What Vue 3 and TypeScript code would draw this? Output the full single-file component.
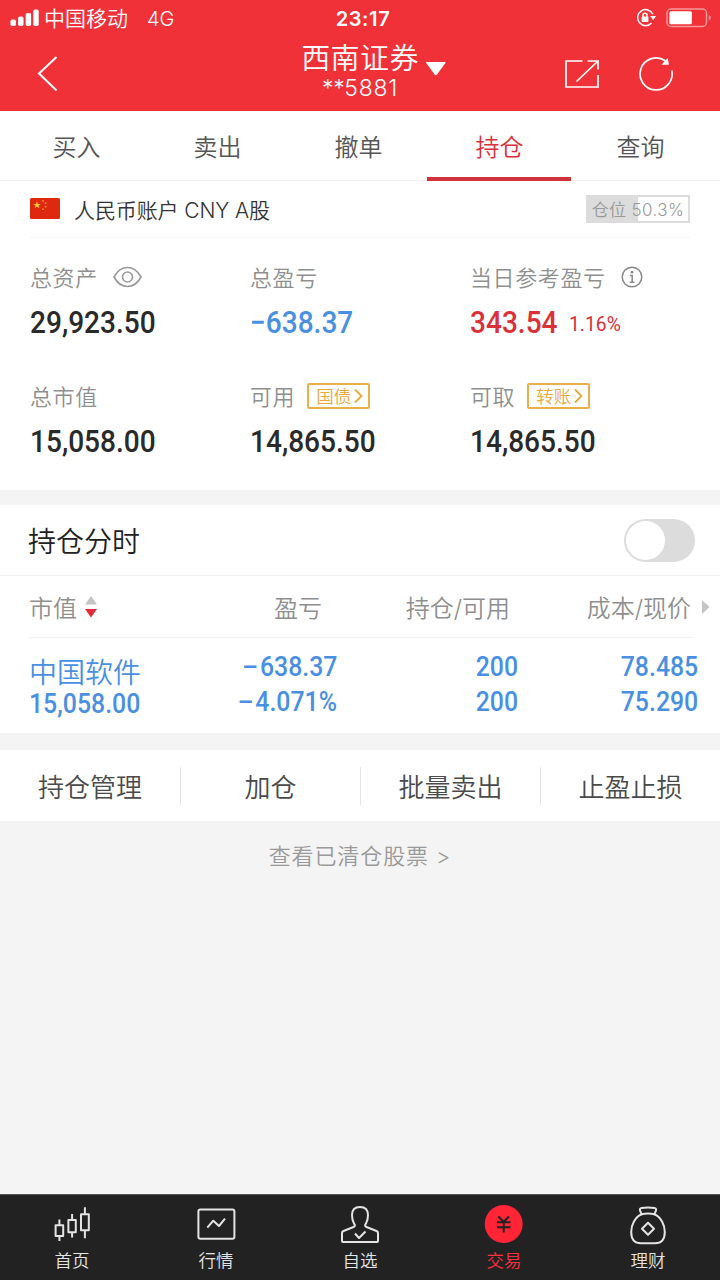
<script setup lang="ts">
import { ref } from 'vue'

interface Asset {
  label: string
  value: string
  tone?: 'fall' | 'rise'
  icon?: 'eye' | 'info'
  tag?: string
  extra?: string
}

const tabs: string[] = ['买入', '卖出', '撤单', '持仓', '查询']
const activeTab = ref(3)

const assets: Asset[] = [
  { label: '总资产', value: '29,923.50', icon: 'eye' },
  { label: '总盈亏', value: '−638.37', tone: 'fall' },
  { label: '当日参考盈亏', value: '343.54', tone: 'rise', icon: 'info', extra: '1.16%' },
  { label: '总市值', value: '15,058.00' },
  { label: '可用', value: '14,865.50', tag: '国债' },
  { label: '可取', value: '14,865.50', tag: '转账' },
]

const position = 50.3
const showChart = ref(false)
const actions: string[] = ['持仓管理', '加仓', '批量卖出', '止盈止损']
const navItems: string[] = ['首页', '行情', '自选', '交易', '理财']
const activeNav = ref(3)
</script>

<template>
  <div class="app">
    <header class="header">
      <div class="status">
        <div class="carrier">
          <svg width="29" height="18" viewBox="0 0 29 18" fill="#fff">
            <rect x="0.5" y="10.5" width="5.4" height="6.5" rx="1.8" />
            <rect x="8.1" y="7.5" width="5.4" height="9.5" rx="1.8" />
            <rect x="15.7" y="4" width="5.4" height="13" rx="1.8" />
            <rect x="23.3" y="0.5" width="5.4" height="16.5" rx="1.8" />
          </svg>
          <span class="carrier-name">中国移动</span>
          <span class="network">4G</span>
        </div>
        <span class="clock">23:17</span>
        <div class="indicators">
          <svg width="20" height="20" viewBox="0 0 20 20" fill="none" stroke="#fff" stroke-width="1.5">
            <path d="M16.9 6.2A8 8 0 1 0 15.6 15" />
            <path d="M14.2 8h5.8L17.2 12.2Z" fill="#fff" stroke="none" />
            <rect x="5.6" y="8.5" width="6.8" height="5.5" rx="0.8" fill="#fff" stroke="none" />
            <path d="M7 9V7.2a2 2 0 0 1 4 0V9" />
          </svg>
          <svg width="46" height="20" viewBox="0 0 46 20" fill="none">
            <rect x="1" y="1" width="39.5" height="17.5" rx="4" stroke="#fff" stroke-opacity="0.5" stroke-width="1.4" />
            <rect x="3.4" y="3.2" width="22.5" height="13" rx="1.5" fill="#fff" />
            <path d="M42.8 6.8q2 1 2 3t-2 3z" fill="#fff" fill-opacity="0.5" />
          </svg>
        </div>
      </div>
      <div class="titlebar">
        <svg class="back" width="22" height="38" viewBox="0 0 22 38" fill="none" stroke="#fff" stroke-width="2">
          <path d="M19.5 2 2 18.5 19.5 35.5" />
        </svg>
        <div class="account">
          <span class="broker">西南证券</span>
          <span class="number"><span class="mask">**</span>5881</span>
        </div>
        <svg class="caret" width="22" height="16" viewBox="0 0 22 16"><path d="M1.5 1h18.6q.8.2.3 1L12 13.6q-1.2 1.3-2.4 0L1.2 2q-.5-.8.3-1z" fill="#fff" /></svg>
        <div class="tools">
          <svg width="36" height="30" viewBox="0 0 36 30" fill="none" stroke="#fff" stroke-width="1.7">
            <path d="M18.5 2H2V28H34V16M23.5 2H34V10.5M33.5 2.5 12.5 22.5" />
          </svg>
          <svg width="36" height="36" viewBox="0 0 36 36" fill="none" stroke="#fff" stroke-width="1.7">
            <path d="M33.7 14.5A16 16 0 1 1 27.5 5" />
            <path d="M23.5 8.800H31L29.6 2z" fill="#fff" stroke="none" />
          </svg>
        </div>
      </div>
    </header>

    <nav class="tabs">
      <button v-for="(tab, i) in tabs" :key="tab" :class="{ active: i === activeTab }" @click="activeTab = i">{{ tab }}</button>
    </nav>

    <section class="summary">
      <div class="account-row">
        <svg width="30" height="21" viewBox="0 0 30 21">
          <rect width="30" height="21" rx="1.5" fill="#de2910" />
          <path d="M7 3.2l.9 2.7h2.9L8.500 7.600l.9 2.700L7 8.600l-2.400 1.700.9-2.700-2.300-1.700h2.900z" fill="#ffce1f" />
          <g fill="#f5a623"><circle cx="13" cy="2.8" r=".9" /><circle cx="15.6" cy="5.2" r=".9" /><circle cx="15.6" cy="8.6" r=".9" /><circle cx="13" cy="11.2" r=".9" /></g>
        </svg>
        <span class="account-name">人民币账户 CNY A股</span>
        <div class="ratio">
          <div class="ratio-fill" :style="{ width: position + '%' }"></div>
          <span>仓位 {{ position }}%</span>
        </div>
      </div>
      <div class="assets">
        <div v-for="a in assets" :key="a.label" class="asset">
          <div class="asset-label">
            <span class="asset-title">{{ a.label }}</span>
            <svg v-if="a.icon === 'eye'" class="eye" width="29" height="22" viewBox="0 0 29 22" fill="none" stroke="#999" stroke-width="1.6">
              <path d="M1 11C4.5 4.500 9 1.500 14.500 1.500S24.500 4.500 28 11C24.500 17.500 20 20.500 14.500 20.500S4.500 17.500 1 11z" />
              <circle cx="14.5" cy="11" r="5" />
            </svg>
            <svg v-if="a.icon === 'info'" class="info" width="22" height="22" viewBox="0 0 22 22" fill="none" stroke="#888" stroke-width="1.5">
              <circle cx="11" cy="11" r="9.8" />
              <circle cx="11" cy="6.2" r="1.4" fill="#888" stroke="none" />
              <path d="M9 9.500h2.200v6.500M8.800 16.200h4.600" />
            </svg>
            <span v-if="a.tag" class="tag"><span>{{ a.tag }}</span><svg width="9" height="16" viewBox="0 0 9 16" fill="none" stroke="#e9a93c" stroke-width="1.8"><path d="M1 1.500 7.500 8 1 14.500" /></svg></span>
          </div>
          <div class="asset-value" :class="a.tone">
            <span class="num">{{ a.value }}</span><span v-if="a.extra" class="extra">{{ a.extra }}</span>
          </div>
        </div>
      </div>
    </section>

    <section class="holdings">
      <div class="chart-row">
        <span>持仓分时</span>
        <button class="switch" :class="{ on: showChart }" @click="showChart = !showChart"><i></i></button>
      </div>
      <div class="table-head">
        <span class="sort">市值
          <svg width="12" height="22" viewBox="0 0 12 22"><path d="M6 0 12 8.500H0z" fill="#c4c4c4" /><path d="M0 13h12L6 21.500z" fill="#e02b3a" /></svg>
        </span>
        <span>盈亏</span><span>持仓/可用</span><span>成本/现价</span>
        <svg class="more" width="8" height="14" viewBox="0 0 8 14"><path d="M0 0 7.500 7 0 14z" fill="#c4c4c4" /></svg>
      </div>
      <div class="stock">
        <div class="stock-name"><span>中国软件</span><b class="num">15,058.00</b></div>
        <div class="cell"><b class="num"><span class="sign">−</span>638.37</b><b class="num"><span class="sign">−</span>4.071%</b></div>
        <div class="cell"><b class="num">200</b><b class="num">200</b></div>
        <div class="cell"><b class="num">78.485</b><b class="num">75.290</b></div>
      </div>
    </section>

    <section class="actions">
      <button v-for="item in actions" :key="item">{{ item }}</button>
    </section>

    <a class="cleared">查看已清仓股票 <span>&gt;</span></a>

    <footer class="nav">
      <button v-for="(item, i) in navItems" :key="item" :class="{ active: i === activeNav }" @click="activeNav = i">
        <svg width="48" height="44" viewBox="0 0 48 44" fill="none" stroke="#e4e4e4" stroke-width="2" stroke-linejoin="round">
          <g v-if="i === 0">
            <rect x="7.6" y="23.2" width="7.6" height="10.8" /><path d="M11.4 17.500v6M11.400 34v5" />
            <rect x="20.4" y="18" width="7.4" height="12.3" /><path d="M24.100 12v6M24.100 30.300v5.200" />
            <rect x="33" y="12.2" width="7.8" height="16" /><path d="M36.900 5.300v7M36.900 28.200v8" />
          </g>
          <g v-else-if="i === 1">
            <rect x="6.4" y="7.4" width="36" height="29.4" rx="2" />
            <path d="M15.300 25.700 21.300 18.700 27 24 33 16.700" />
          </g>
          <g v-else-if="i === 2">
            <path d="M6 39V31q0-1.500 1.500-2L17.500 25q2.500-1.200.5-3.500C16.500 19 16 17 16 13C16 8 19 5 24 5s8 3 8 8c0 4-.5 6-2 8.500q-2 2.300.5 3.500L40.500 29q1.500.5 1.500 2V39q0 1-1 1H7q-1 0-1-1z" />
            <path d="M19 31.500 23 36 29.500 29.500" />
          </g>
          <g v-else-if="i === 3">
            <circle cx="23.7" cy="22" r="19" fill="#ff2436" stroke="none" />
            <path d="M18.300 14.500 23.700 19.800 29 14.500M17 20.200H30.500M17 25.200H30.500M23.700 19.500V30.500" stroke="#222" />
          </g>
          <g v-else>
            <path d="M16 8.500Q15.500 6.300 17.500 6Q24 5 30.500 6Q32.500 6.300 32 8.500L30.300 12.300Q24 10.800 17.700 12.300z" />
            <path d="M17.700 12.300C11 15 7.200 23 7.200 30C7.200 38 11 41.300 17 41.300H31C37 41.300 40.800 38 40.800 30C40.800 23 37 15 30.300 12.300" />
            <path d="M24 20.700 30 26.700 24 32.700 18 26.700z" />
          </g>
        </svg>
        <span>{{ item }}</span>
      </button>
    </footer>
  </div>
</template>

<style>
html,
body {
  margin: 0;
  background: #f4f4f4;
}
</style>

<style scoped>
* {
  box-sizing: border-box;
}
.app {
  width: 720px;
  height: 1280px;
  display: flex;
  flex-direction: column;
  overflow: hidden;
  background: #f4f4f4;
  font-family: Inter, 'Noto Sans CJK SC', sans-serif;
  font-weight: 350;
  color: #333;
  white-space: nowrap;
}
svg {
  display: block;
  flex: none;
}
button {
  border: 0;
  padding: 0;
  background: none;
  font: inherit;
  color: inherit;
}
.header {
  height: 111px;
  background: #f03138;
  color: #fff;
}
.status {
  height: 36px;
  padding: 0 8px 0 10px;
  display: grid;
  grid-template-columns: 1fr auto 1fr;
  align-items: center;
}
.carrier {
  display: flex;
  align-items: center;
}
.carrier-name {
  margin-left: 5px;
  padding-top: 2px;
  font-size: 21px;
  line-height: 34px;
}
.network {
  margin-left: 19px;
  padding-top: 2px;
  font-size: 20px;
}
.clock {
  font-size: 20px;
  font-weight: 600;
  letter-spacing: 0.6px;
  margin-left: 4px;
  padding-top: 2px;
}
.indicators {
  display: flex;
  justify-content: flex-end;
  align-items: center;
  gap: 10px;
}
.titlebar {
  height: 75px;
  display: flex;
  align-items: center;
}
.back {
  margin-left: 37px;
}
.account {
  width: 120px;
  margin-left: 241px;
  margin-top: -4px;
  display: flex;
  flex-direction: column;
  align-items: center;
}
.broker {
  font-size: 29px;
  letter-spacing: 0.4px;
  line-height: 34px;
}
.number {
  margin-top: -1px;
  font-size: 23px;
  letter-spacing: 0.7px;
  line-height: 26px;
}
.mask {
  letter-spacing: -0.4px;
}
.caret {
  margin: -10px 0 0 5px;
}
.tools {
  display: flex;
  align-items: center;
  gap: 38px;
  margin-left: 117px;
}
.tabs {
  height: 70px;
  padding-left: 6px;
  display: grid;
  grid-template-columns: repeat(5, 141px);
  background: #fff;
  border-bottom: 1px solid #f0f0f0;
}
.tabs button {
  position: relative;
  height: 69px;
  padding-top: 5px;
  font-size: 24px;
  line-height: 64px;
  color: #555;
}
.tabs .active {
  color: #d8303a;
}
.tabs .active::after {
  content: '';
  position: absolute;
  left: -2px;
  right: -1px;
  bottom: -1px;
  height: 4px;
  background: #d0343a;
}
.summary {
  height: 309px;
  background: #fff;
}
.account-row {
  height: 57px;
  margin: 0 30px;
  display: flex;
  align-items: center;
  border-bottom: 1px solid #f5f5f5;
}
.account-row > svg {
  margin-top: -1px;
}
.account-name {
  margin-left: 14px;
  padding-top: 4px;
  font-size: 21px;
  letter-spacing: -0.1px;
  line-height: 52px;
}
.ratio {
  position: relative;
  width: 104px;
  height: 28px;
  margin-left: auto;
  border: 2px solid #dcdcdc;
  font-size: 17px;
  line-height: 26px;
  text-align: center;
  color: #999;
  letter-spacing: 0.4px;
}
.ratio-fill {
  position: absolute;
  inset: 0 auto 0 0;
  background: #dcdcdc;
}
.ratio span {
  position: relative;
}
.assets {
  padding: 21px 0 0 30px;
  display: grid;
  grid-template-columns: repeat(3, 220px);
  grid-auto-rows: 118.5px;
}
.asset-label {
  display: flex;
  align-items: center;
  height: 36px;
  font-size: 22px;
  letter-spacing: 0.6px;
  color: #8f8f8f;
}
.asset-title {
  padding-bottom: 2px;
}
.eye {
  margin-left: 15px;
}
.info {
  margin-left: 15px;
}
.tag {
  display: flex;
  align-items: center;
  gap: 3px;
  width: 63px;
  height: 26px;
  margin-left: 12px;
  padding-left: 7px;
  border: 2px solid #e9b04a;
  border-radius: 2px;
  font-size: 17.5px;
  letter-spacing: 0;
  line-height: 20px;
  color: #e9a93c;
}
.tag span {
  padding-top: 2px;
}
.num,
.extra {
  display: inline-block;
  font-family: Roboto, sans-serif;
  transform: scaleX(0.92);
  transform-origin: left;
}
.asset-value {
  height: 36px;
  margin-top: 9px;
  font-size: 31px;
  font-weight: 500;
  line-height: 36px;
  color: #2a2a2a;
}
.asset-value .num {
  transform: scaleX(0.905);
}
.asset-value.fall {
  color: #4a90e2;
}
.asset-value.rise {
  color: #d9303a;
}
.extra {
  margin-left: 2px;
  font-size: 21px;
  font-weight: 400;
  vertical-align: 2px;
  line-height: 24px;
}
.holdings {
  height: 228px;
  margin-top: 15px;
  background: #fff;
}
.chart-row {
  height: 71px;
  padding: 0 25px 0 28px;
  display: flex;
  align-items: center;
  justify-content: space-between;
  border-bottom: 1px solid #f0f0f0;
  font-size: 28px;
  color: #222;
}
.switch {
  width: 71px;
  height: 43px;
  padding: 2px;
  border-radius: 22px;
  background: #dcdcdc;
}
.switch i {
  display: block;
  width: 39px;
  height: 39px;
  border-radius: 50%;
  background: #fff;
}
.switch.on i {
  margin-left: auto;
}
.table-head {
  height: 62px;
  margin-left: 29px;
  padding-bottom: 2px;
  display: grid;
  grid-template-columns: 113px 180px 188px 181px auto;
  align-items: center;
  font-size: 24px;
  color: #8f8f8f;
  text-align: right;
  background: linear-gradient(#f3f3f3, #f3f3f3) left bottom / 664px 1px no-repeat;
}
.sort {
  display: flex;
  align-items: center;
  gap: 8px;
}
.sort svg,
.more {
  margin-top: 2px;
}
.more {
  margin-left: 11px;
}
.stock {
  height: 95px;
  padding: 12px 22px 0 29px;
  display: grid;
  grid-template-columns: 128px 180px 181px 180px;
  font-size: 28px;
  color: #4a90e2;
}
.stock-name {
  display: flex;
  flex-direction: column;
}
.stock-name span {
  padding-top: 4px;
  line-height: 38px;
  height: 37px;
}
.stock b {
  font-size: 27px;
  font-weight: 500;
  line-height: 35px;
}
.cell {
  display: flex;
  flex-direction: column;
  align-items: flex-end;
}
.cell .num {
  transform-origin: right;
}
.sign {
  display: inline-block;
  margin-right: 3px;
  transform: scaleX(1.2);
}
.actions {
  height: 71px;
  margin-top: 17px;
  display: grid;
  grid-template-columns: repeat(4, 1fr);
  align-items: center;
  background: #fff;
}
.actions button {
  height: 38px;
  font-size: 26px;
  color: #4a4a4a;
}
.actions button + button {
  border-left: 1px solid #e4e4e4;
}
.cleared {
  margin-top: 17px;
  font-size: 22px;
  letter-spacing: 0.9px;
  line-height: 36px;
  text-align: center;
  color: #999;
}
.nav {
  height: 86px;
  margin-top: auto;
  display: grid;
  grid-template-columns: repeat(5, 1fr);
  background: #222;
  border-top: 1px solid #555;
  color: #e4e4e4;
}
.nav button {
  padding-top: 7px;
  display: flex;
  flex-direction: column;
  align-items: center;
  font-size: 17.5px;
  line-height: 30px;
}
.nav .active {
  color: #ff2f40;
}
</style>
